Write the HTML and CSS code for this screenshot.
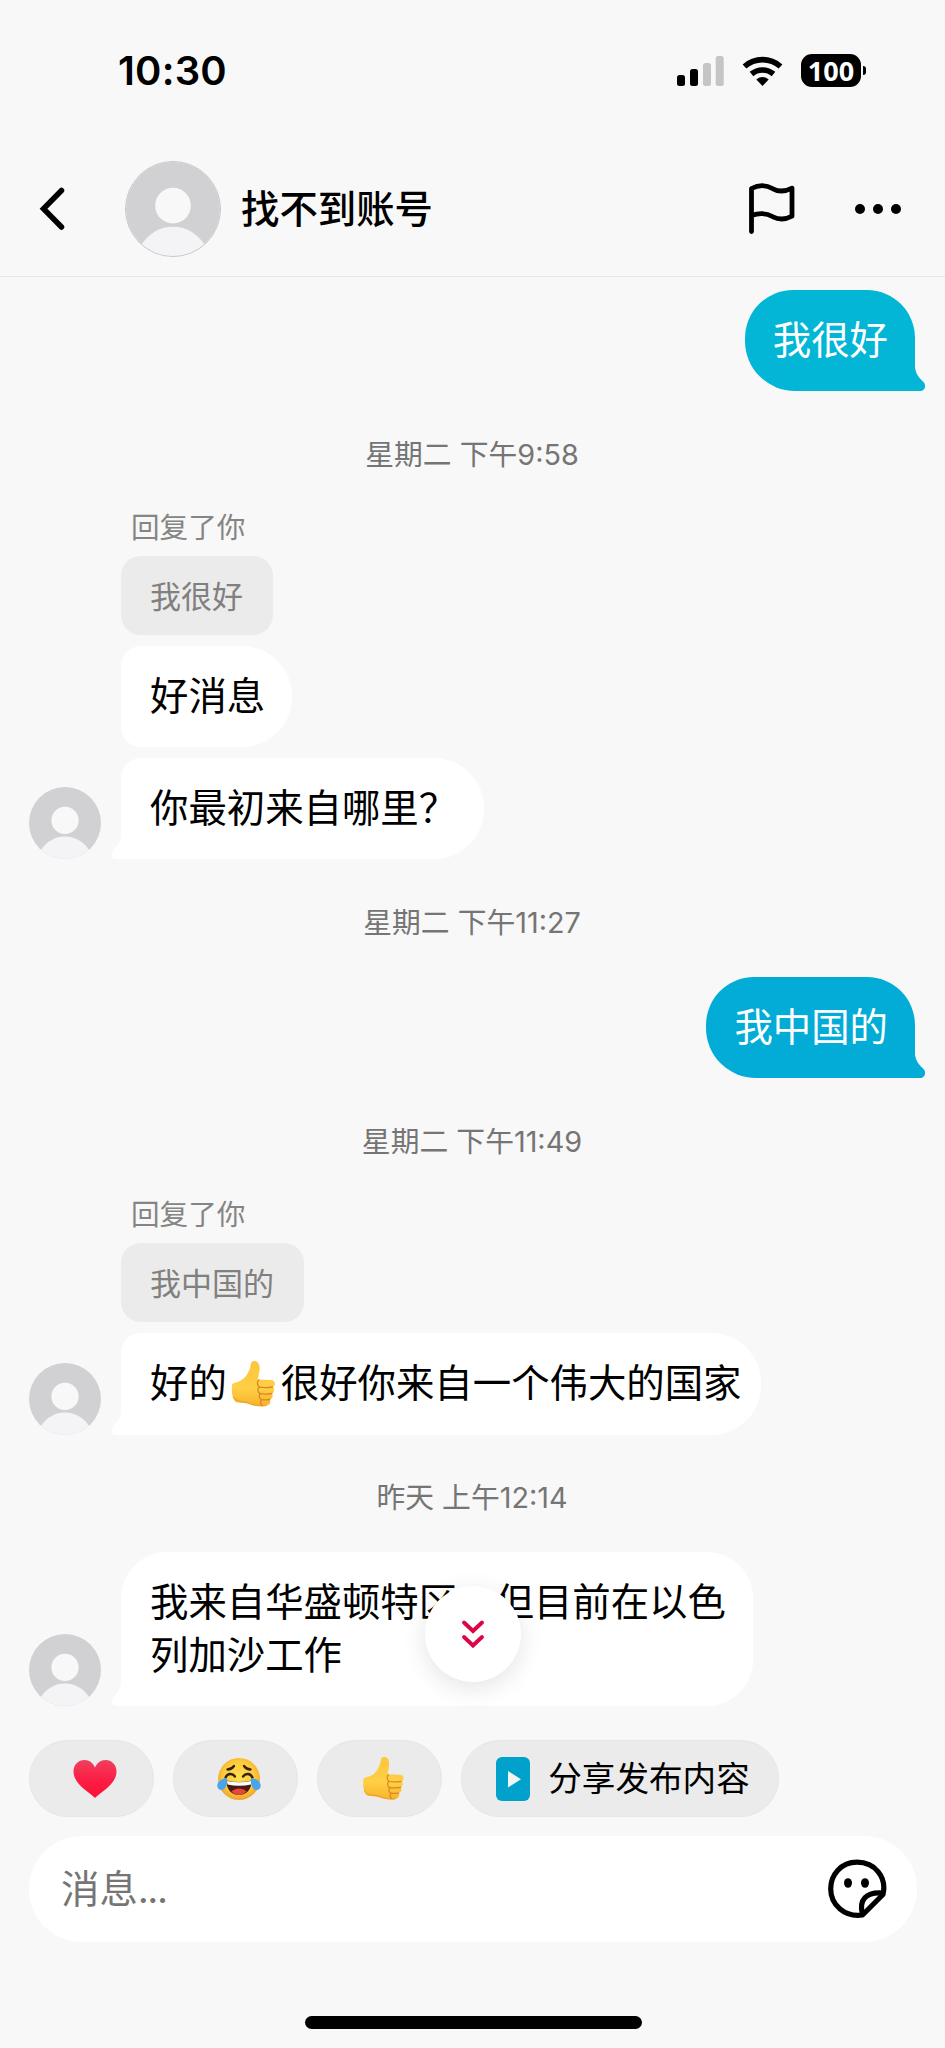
FILE: index.html
```
<!DOCTYPE html>
<html lang="zh-CN">
<head>
<meta charset="utf-8">
<title>找不到账号</title>
<link rel="stylesheet" href="styles.css">
</head>
<body>
<svg width="0" height="0" class="defs" aria-hidden="true">
  <defs>
    <linearGradient id="g-heart" x1="0" y1="0" x2="0" y2="1"><stop offset="0" stop-color="#f0405f"/><stop offset=".5" stop-color="#fb1f45"/><stop offset="1" stop-color="#ff0f35"/></linearGradient>
    <radialGradient id="g-face" cx=".5" cy=".45" r=".55"><stop offset="0" stop-color="#ffe04d"/><stop offset=".7" stop-color="#fdc93a"/><stop offset="1" stop-color="#f0a02a"/></radialGradient>
    <linearGradient id="g-thumb" x1="0" y1="0" x2="0" y2="1"><stop offset="0" stop-color="#fcc63c"/><stop offset=".6" stop-color="#ffcf45"/><stop offset="1" stop-color="#f7b32b"/></linearGradient>
    <clipPath id="c-avatar"><circle cx="48" cy="48" r="48"/></clipPath>
    <symbol id="avatar" viewBox="0 0 96 96">
      <g clip-path="url(#c-avatar)"><rect width="96" height="96" fill="#d1d1d3"/><circle cx="48" cy="44.500" r="18.200" fill="#f8f8f9"/><path d="M16 84C24 72 35 66 48 66s24 6 32 18v14H16z" fill="#f4f4f7"/></g>
    </symbol>
    <symbol id="thumb" viewBox="0 0 44 48">
      <path d="M1 25c1-3 5-2 8-4 6-3 9-9 10.500-15C20 2 21 .6 24 1c4 .7 5 5 4.500 9-.4 4-1.500 7-1.500 9.500L40 20c4 0 5.500 5 2 7 2 2 1.500 5.500-1 6.500 1.500 2.500.5 5-2 6 1 3-.5 6-4 6.500-6 .8-12 0-17-2-4-1.800-9-.5-13-2C1 39 .5 31 1 25z" fill="url(#g-thumb)"/>
      <path d="M28 20c-2 1-2.500 5.500.5 7 -2.500 1.500-2 5.500.8 6.500-1.800 2-1.300 5 1.200 6-1.500 1.800-1 5 1 6M28.500 27.200c4 .7 9 .5 13-.2M29.300 33.700c4 .5 8 .4 11.500-.2M30.500 39.700c3 .4 6 .3 8.300-.2" fill="none" stroke="#dc8524" stroke-width="1.300" stroke-linecap="round"/>
      <path d="M2 37c4 6 9 4 14 5.500 7 3 14 3.800 19 3" fill="none" stroke="#e79a2b" stroke-width="1.200" opacity=".7"/>
    </symbol>
    <symbol id="tail-out" viewBox="0 0 40 24">
      <path d="M30 0C31 6 34 10 38 13.500C42 17 40 23 35.500 23L0 23V0z" fill="currentColor"/>
    </symbol>
    <symbol id="tail-in" viewBox="0 0 40 24">
      <path d="M10 0C9.500 6 6 10.500 2 15C-1 19 1 23 5 23H40V0z" fill="currentColor"/>
    </symbol>
  </defs>
</svg>

<div class="screen">
  <div class="status">
    <span class="status-time">10:30</span>
    <div class="status-icons">
      <svg width="47" height="32" viewBox="0 0 47 32"><rect x="0" y="20" width="8" height="11" rx="2.500"/><rect x="13" y="14" width="8" height="17" rx="2.500"/><rect x="26" y="8" width="8" height="23" rx="2.500" fill="#c5c5c5"/><rect x="38.700" y="1" width="8" height="30" rx="2.500" fill="#c5c5c5"/></svg>
      <svg class="wifi" width="42" height="32" viewBox="0 0 42 32"><g fill="none" stroke="#000" stroke-width="5.600"><path d="M2.500 11.500A27 27 0 0 1 38.500 11.500"/><path d="M9.500 19A17 17 0 0 1 31.500 19"/></g><path d="M14.300 24.500Q20.500 19.700 26.700 24.500L20.500 31z"/></svg>
      <div class="battery"><span class="battery-level">100</span><i class="battery-cap"></i></div>
    </div>
  </div>

  <header class="header">
    <svg class="back" width="26" height="44" viewBox="0 0 26 44"><path d="M22.500 3.500L4.500 21.800 22.500 40" fill="none" stroke="#000" stroke-width="5.500" stroke-linejoin="miter" stroke-linecap="round"/></svg>
    <svg class="header-avatar" width="96" height="96"><use href="#avatar"/></svg>
    <h1 class="header-name">找不到账号</h1>
    <svg class="flag" width="48" height="52" viewBox="0 0 48 52"><path d="M3.500 48.500V5.500C11 1.500 18 1.500 25 5.800c6.500 3.500 12 3 19-.6v28c-7 3.700-12.500 4-19 .6-7-4.200-13-4.500-21.500-1.300" fill="none" stroke="#000" stroke-width="4.800" stroke-linejoin="round" stroke-linecap="round"/></svg>
    <svg class="more" width="48" height="12" viewBox="0 0 48 12"><circle cx="6" cy="6" r="5"/><circle cx="24" cy="6" r="5"/><circle cx="42" cy="6" r="5"/></svg>
  </header>

  <main class="chat">
    <div class="row row--mine"><div class="bubble bubble--mine teal">我很好<svg class="tail tail--right" width="40" height="24"><use href="#tail-out"/></svg></div></div>

    <p class="stamp stamp--first">星期二 下午9:58</p>

    <div class="row">
      <div class="stack">
        <span class="reply-label">回复了你</span>
        <div class="quote">我很好</div>
        <div class="bubble">好消息</div>
      </div>
    </div>
    <div class="row row--next">
      <svg class="avatar" width="72" height="72"><use href="#avatar"/></svg>
      <div class="bubble bubble--tail">你最初来自哪里？<svg class="tail tail--left" width="40" height="24"><use href="#tail-in"/></svg></div>
    </div>

    <p class="stamp">星期二 下午11:27</p>

    <div class="row row--mine"><div class="bubble bubble--mine blue">我中国的<svg class="tail tail--right" width="40" height="24"><use href="#tail-out"/></svg></div></div>

    <p class="stamp stamp--reply">星期二 下午11:49</p>

    <div class="row">
      <svg class="avatar" width="72" height="72"><use href="#avatar"/></svg>
      <div class="stack">
        <span class="reply-label">回复了你</span>
        <div class="quote">我中国的</div>
        <div class="bubble bubble--tail bubble--emoji">好的<svg class="inline-thumb" width="46" height="48"><use href="#thumb"/></svg>很好你来自一个伟大的国家<svg class="tail tail--left" width="40" height="24"><use href="#tail-in"/></svg></div>
      </div>
    </div>

    <p class="stamp stamp--last">昨天 上午12:14</p>

    <div class="row">
      <svg class="avatar" width="72" height="72"><use href="#avatar"/></svg>
      <div class="bubble bubble--tail bubble--long">我来自华盛顿特区，但目前在以色<br>列加沙工作<svg class="tail tail--left" width="40" height="24"><use href="#tail-in"/></svg></div>
    </div>

    <button class="jump" aria-label="跳到最新消息"><svg width="24" height="30" viewBox="0 0 24 30"><path d="M3 3.500l9 8.500 9-8.500M3 18l9 8.500 9-8.500" fill="none" stroke="#dc0545" stroke-width="3.900" stroke-linecap="round" stroke-linejoin="miter"/></svg></button>
  </main>

  <div class="quick">
    <button class="pill"><svg width="44" height="40" viewBox="0 0 44 40"><path d="M22 39C16 33 .5 25 .5 12.500C.5 5.500 5.500 1 11.500 1c5 0 8.500 3 10.500 7.500C24 4 27.500 1 32.500 1c6 0 11 4.500 11 11.500C43.500 25 28 33 22 39z" fill="url(#g-heart)"/></svg></button>
    <button class="pill"><svg width="44" height="44" viewBox="0 0 44 44"><circle cx="22" cy="22" r="21" fill="url(#g-face)"/><path d="M9.500 23.500q12.500 3 25 0C35 32 29.500 38 22 38S9 32 9.500 23.500z" fill="#4c1a12"/><path d="M10 24q12 2.500 24 0v3.500q-12 2.500-23.500 0z" fill="#fff"/><path d="M14.500 34.500c4-4 11-4 15 0-4 4.500-11 4.500-15 0z" fill="#e8453c"/><path d="M8.500 20.500c2-4.500 7-4.500 9.500-1M26 19.500c2.500-3.500 7.500-3.500 9.500 1M10.500 12.500c3 0 5-1.300 6.500-3.500M27 9c1.500 2.200 3.500 3.500 6.500 3.500" fill="none" stroke="#372012" stroke-width="2.300" stroke-linecap="round"/><path d="M10 21c-4 .3-9.500 3-9.700 7.500C.2 31 2 33 4.500 33 9 33 10.500 26 10 21zM34 21c4 .3 9.500 3 9.700 7.500.1 2.500-1.700 4.500-4.200 4.500C35 33 33.500 26 34 21z" fill="#47a5ee"/></svg></button>
    <button class="pill"><svg class="pill-thumb" width="42" height="45"><use href="#thumb"/></svg></button>
    <button class="pill pill--share"><svg width="34" height="44" viewBox="0 0 34 44"><rect width="34" height="44" rx="6" fill="#00a2cb"/><path d="M12 14v16.500l13-8.200z" fill="#f4f4f4"/></svg><span class="share-text">分享发布内容</span></button>
  </div>

  <div class="composer">
    <span class="composer-hint">消息<span class="dots">...</span></span>
    <svg class="sticker" width="60" height="60" viewBox="0 0 60 60"><g fill="none" stroke="#000" stroke-width="5.200" stroke-linejoin="round"><path d="M56 35.500C60 18 48 3.200 30 3.200C14 3.200 3.700 16 3.700 30C3.700 46 18 58.500 35.500 56L56 35.500z"/><path d="M35.500 55.500C31.500 41 39 32.500 56 34"/></g><ellipse cx="21" cy="24" rx="4" ry="4.800"/><ellipse cx="38" cy="24" rx="4" ry="4.800"/></svg>
  </div>
  <div class="home-bar"></div>
</div>
</body>
</html>
```
FILE: styles.css
```
* { box-sizing: border-box; }
body {
  margin: 0;
  background: #f8f8f8;
  color: #000;
  font-family: "Noto Sans CJK SC", sans-serif;
}
button { border: 0; padding: 0; font: inherit; color: inherit; }
svg { display: block; flex: none; }
.defs { position: absolute; }
.screen {
  width: 945px;
  height: 2048px;
  display: flex;
  flex-direction: column;
  overflow: hidden;
}

/* status bar */
.status {
  height: 141px;
  padding: 0 79px 0 118px;
  display: flex;
  justify-content: space-between;
  align-items: center;
}
.status-time {
  font: 600 40px/48px Inter, sans-serif;
  letter-spacing: 0.2px;
}
.status-icons { display: flex; align-items: center; }
.wifi { margin: 0 17px 0 18px; }
.battery {
  display: flex;
  align-items: center;
  gap: 2px;
}
.battery-level {
  width: 60px;
  height: 33px;
  border-radius: 11px;
  background: #000;
  color: #fff;
  font: 700 27px/33px "Open Sans", sans-serif;
  text-align: center;
}
.battery-cap {
  width: 3px;
  height: 9px;
  border-radius: 0 4px 4px 0;
  background: #000;
}

/* header */
.header {
  height: 136px;
  padding: 0 43px 0 39px;
  border-bottom: 1px solid #e6e6e6;
  display: flex;
  align-items: center;
}
.header-avatar {
  margin-left: 60px;
  border: 1px solid #c6c6c8;
  border-radius: 50%;
}
.header-name {
  margin: 0 auto 0 20px;
  padding-bottom: 5px;
  font-size: 38.4px;
  line-height: 54px;
  font-weight: 500;
}
.flag { margin-right: 58px; }

/* conversation */
.chat {
  position: relative;
  height: 1441px;
  padding: 12.500px 30px 0 29px;
}
.row { display: flex; align-items: flex-end; }
.row--mine { justify-content: flex-end; }
.row--next { margin-top: 11px; }
.row > .stack:first-child { margin-left: 92px; }
.avatar { margin-right: 20px; }
.stack { display: flex; flex-direction: column; align-items: flex-start; }
.bubble {
  position: relative;
  padding: 21px 27px 27px 29px;
  border-radius: 20px 50px 50px 20px;
  background: #fff;
  font-size: 38.4px;
  line-height: 53px;
  white-space: nowrap;
}
.bubble--mine { padding-left: 28px; border-radius: 48px 48px 0 50px; color: #fff; }
.bubble--tail { border-bottom-left-radius: 0; }
.bubble--long { border-radius: 46px 46px 46px 0; }
.bubble--emoji { padding-right: 19px; }
.teal { background: #03b6d5; }
.blue { background: #02acd7; }
.tail { position: absolute; bottom: -1px; color: #fff; }
.teal .tail { color: #03b6d5; }
.blue .tail { color: #02acd7; }
.tail--right { right: -10px; }
.tail--left { left: -10px; }
.inline-thumb { display: inline-block; vertical-align: middle; margin: -4px 5px 0 3px; }

.stamp {
  margin: 42px 0 32px;
  font: 28.800px/44px Inter, "Noto Sans CJK SC", sans-serif;
  color: #757575;
  text-align: center;
}
.stamp--first { margin-bottom: 29px; }
.stamp--reply { margin-bottom: 29px; }
.stamp--last { margin: 41px 0 32px; }
.reply-label {
  margin: 0 0 10px 10px;
  font-size: 28.600px;
  line-height: 40px;
  color: #858585;
}
.quote {
  margin-bottom: 11px;
  padding: 16px 30px 18px 29px;
  border-radius: 20px;
  background: #ebebeb;
  color: #808080;
  font-size: 31px;
  line-height: 45px;
}

.jump {
  position: absolute;
  left: 425px;
  bottom: 36px;
  width: 96px;
  height: 96px;
  border-radius: 50%;
  background: #fff;
  box-shadow: 0 6px 24px rgba(0, 0, 0, 0.11);
  display: flex;
  align-items: center;
  justify-content: center;
}

/* quick replies */
.quick { display: flex; gap: 19px; padding: 22px 29px 19px; }
.pill {
  width: 125px;
  height: 77px;
  border: 1px solid #e6e6e6;
  border-radius: 39px;
  background: #ebebeb;
  display: flex;
  align-items: center;
  justify-content: center;
  padding-left: 6px;
}
.pill--share {
  width: 318px;
  gap: 18px;
  font-size: 33.600px;
  line-height: 46px;
}
.share-text { padding-bottom: 3px; }

/* message field */
.composer {
  width: 888px;
  height: 106px;
  margin-left: 29px;
  padding: 0 30px 0 32px;
  border-radius: 53px;
  background: #fff;
  display: flex;
  align-items: center;
  justify-content: space-between;
}
.composer-hint { padding-bottom: 3px; font-size: 38.4px; line-height: 54px; color: #757575; }
.dots { font-family: Inter, sans-serif; letter-spacing: -1.500px; }
.home-bar {
  width: 337px;
  height: 13px;
  margin: 74px 0 0 305px;
  border-radius: 7px;
  background: #000;
}
```
